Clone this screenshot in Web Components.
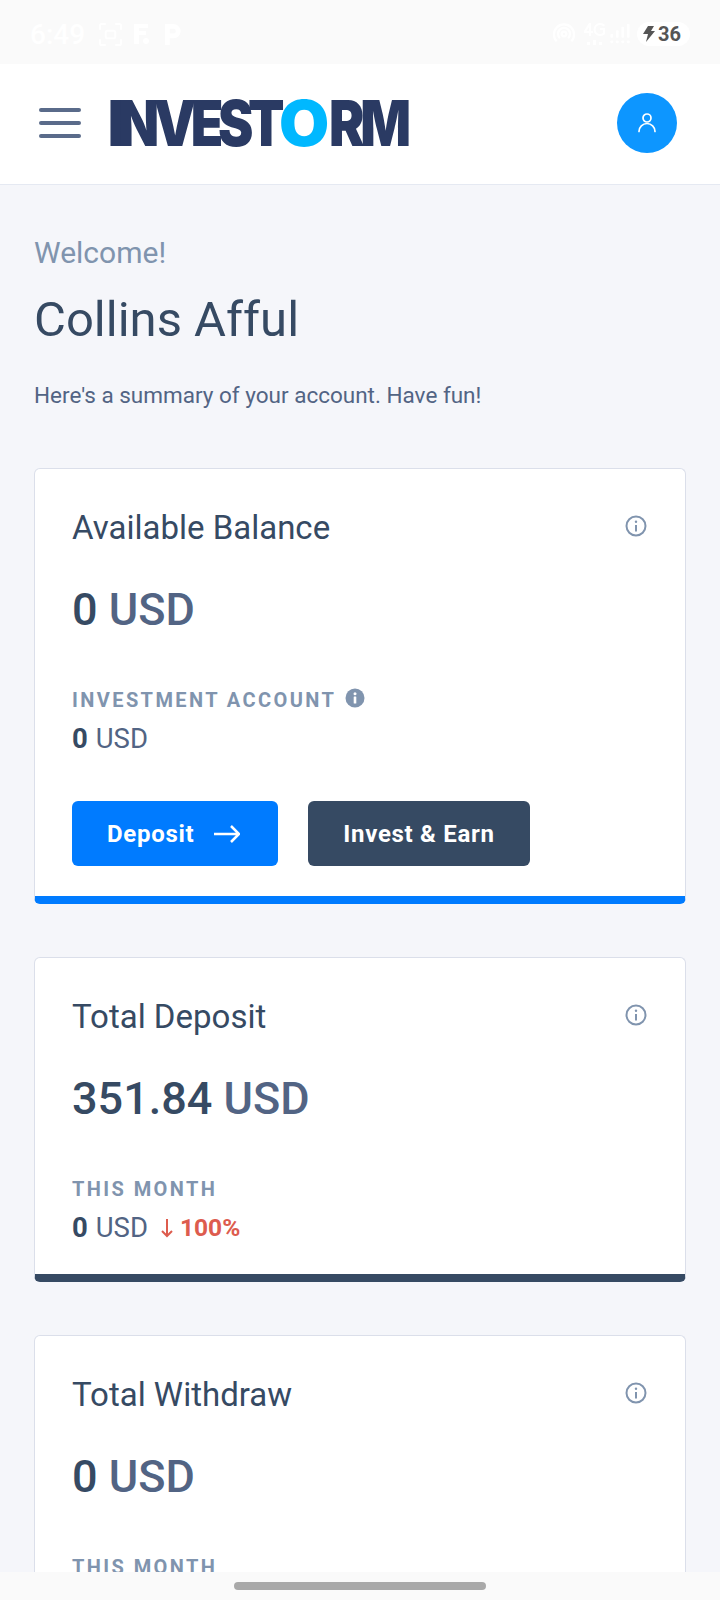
<!DOCTYPE html>
<html lang="en">
<head>
<meta charset="utf-8">
<title>Investorm</title>
<style>
    html, body { margin: 0; padding: 0; }
    body { width: 720px; height: 1600px; overflow: hidden; background: #f5f6fa; font-family: Roboto, "Liberation Sans", sans-serif; }
    #app { display: flex; flex-direction: column; height: 1600px; }
    #content { flex: 1; min-height: 0; overflow: hidden; padding: 0 34px; }
</style>
</head>
<body>
<div id="app">
    <status-bar></status-bar>
    <site-header></site-header>
    <div id="content">
        <welcome-block name="Collins Afful" note="Here's a summary of your account. Have fun!"></welcome-block>
        <stat-card title="Available Balance" amount="0" label="INVESTMENT ACCOUNT" sub="0" bar="#007bff" hint wide>
            <action-button slot="actions" color="#007bff" arrow>Deposit</action-button>
            <action-button slot="actions" color="#364a63">Invest &amp; Earn</action-button>
        </stat-card>
        <stat-card title="Total Deposit" amount="351.84" label="THIS MONTH" sub="0" bar="#364a63" change="100%"></stat-card>
        <stat-card title="Total Withdraw" amount="0" label="THIS MONTH" bar="#364a63"></stat-card>
    </div>
    <nav-bar></nav-bar>
</div>

<script>
class StatusBar extends HTMLElement {
    constructor() {
        super();
        this.attachShadow({ mode: 'open' });
        this.shadowRoot.innerHTML = `
            <style>
                :host { display: flex; flex: none; height: 64px; background: #fafafa; align-items: center; padding: 4px 30px 0 30px; box-sizing: border-box; font-family: Roboto, sans-serif; }
                .time { color: #fff; font-size: 28px; font-weight: 500; margin-right: 2px; }
                svg { display: block; flex: none; }
                .left { display: flex; align-items: center; gap: 12px; flex: 1; }
                .right { display: flex; align-items: center; gap: 4px; }
                .battery { display: flex; align-items: center; gap: 3px; height: 24px; padding: 0 9px 0 6px; margin-left: 2px; background: #fff; border-radius: 12px; color: #555; font-size: 20px; font-weight: 700; }
            </style>
            <div class="left">
                <span class="time">6:49</span>
                <svg width="23" height="23" viewBox="0 0 24 24" fill="none" stroke="#fff" stroke-width="2"><path d="M1 7V3a2 2 0 0 1 2-2h4M17 1h4a2 2 0 0 1 2 2v4M23 17v4a2 2 0 0 1-2 2h-4M7 23H3a2 2 0 0 1-2-2v-4"/><rect x="7" y="8" width="10" height="8" rx="2"/></svg>
                <svg width="15" height="20" viewBox="0 0 15 20" fill="#fff"><path d="M0 0h14v4H5v3h7v4H5v9H0z"/><circle cx="12" cy="17" r="3"/></svg>
                <svg width="17" height="21" viewBox="0 0 18 22" fill="#fff" style="margin-left:4px"><path d="M0 0h9a7.500 7.500 0 0 1 0 15H5v7H0zM5 5v5h4a2.500 2.500 0 0 0 0-5z"/></svg>
            </div>
            <div class="right">
                <svg width="22" height="22" viewBox="0 0 24 24" fill="none" stroke="#fff" stroke-width="2.500"><circle cx="12" cy="12" r="2.500"/><path d="M4 20a11 11 0 1 1 16 0M7.500 16.500a6.500 6.500 0 1 1 9 0"/></svg>
                <svg width="22" height="24" viewBox="0 0 22 24" fill="#fff" style="margin-left:5px"><rect x="3" y="20" width="3" height="3"/><rect x="9" y="18" width="3" height="5"/><rect x="15" y="20" width="3" height="3"/><path d="M0 9l5-8h2v8h2v2H7v3H5v-3H0zM5 9V5L2.500 9zM16 1a6 6 0 0 1 5 2l-1.500 1.500A4 4 0 0 0 16 3a4 4 0 0 0 0 9 3.500 3.500 0 0 0 3-1V8h-3V6h5v6a6.500 6.500 0 0 1-5 2 6.500 6.500 0 0 1 0-13z"/></svg>
                <svg width="21" height="22" viewBox="0 0 22 24" fill="#fff"><rect x="0" y="12" width="3" height="4" rx="1"/><rect x="6" y="8" width="3" height="8" rx="1"/><rect x="12" y="4" width="3" height="12" rx="1"/><rect x="18" y="1" width="3" height="15" rx="1"/><rect x="0" y="19" width="3" height="3" rx="1"/><rect x="6" y="19" width="3" height="3" rx="1"/><rect x="12" y="19" width="3" height="3" rx="1"/><rect x="18" y="19" width="3" height="3" rx="1"/></svg>
                <span class="battery">
                    <svg width="12" height="16" viewBox="0 0 12 16" fill="#555"><path d="M5 0h6L8 5h4L3 16l2-8H0z"/></svg>
                    36
                </span>
            </div>
        `;
    }
}

class SiteHeader extends HTMLElement {
    constructor() {
        super();
        this.attachShadow({ mode: 'open' });
        this.shadowRoot.innerHTML = `
            <style>
                :host { display: flex; flex: none; height: 121px; background: #fff; border-bottom: 1px solid #e5e9f2; box-sizing: border-box; align-items: center; padding: 0 43px 2px 39px; }
                .menu { display: flex; flex-direction: column; gap: 9px; width: 42px; margin-right: 27px; }
                .menu i { display: block; height: 4px; border-radius: 2px; background: #5a6b8a; }
                .logo { flex: 1; font-family: Inter, sans-serif; font-weight: 900; font-size: 63px; line-height: 1; color: #2a3a63; white-space: nowrap; transform: scaleX(.844); transform-origin: left center; letter-spacing: -5px; }
                .logo .a { letter-spacing: -6.300px; }
                .logo .o { display: inline-block; color: #00b8ff; letter-spacing: 0; transform: scaleX(1.22); margin: 0 5px; }
                .avatar { display: flex; align-items: center; justify-content: center; width: 60px; height: 60px; border-radius: 50%; background: #0d96ff; }
            </style>
            <div class="menu"><i></i><i></i><i></i></div>
            <div class="logo"><span class="a">INVEST</span><span class="o">O</span>RM</div>
            <div class="avatar">
                <svg width="18" height="20" viewBox="0 0 18 20" fill="none" stroke="#fff" stroke-width="1.700" stroke-linecap="round"><circle cx="9" cy="5" r="4"/><path d="M1 18.500a8 8 0 0 1 16 0"/></svg>
            </div>
        `;
    }
}

class WelcomeBlock extends HTMLElement {
    constructor() {
        super();
        this.attachShadow({ mode: 'open' });
    }

    connectedCallback() {
        this.shadowRoot.innerHTML = `
            <style>
                :host { display: block; padding-top: 51px; margin-bottom: 57px; font-family: Roboto, sans-serif; }
                .hi { font-size: 30px; line-height: 34px; color: #8094ae; }
                h1 { margin: 23px 0 0; font-size: 49px; line-height: 54px; font-weight: 400; color: #364a63; }
                p { margin: 32px 0 0; font-size: 22.500px; line-height: 32px; color: #526484; }
            </style>
            <div class="hi">Welcome!</div>
            <h1>${this.getAttribute('name')}</h1>
            <p>${this.getAttribute('note')}</p>
        `;
    }
}

class InfoIcon extends HTMLElement {
    constructor() {
        super();
        this.attachShadow({ mode: 'open' });
    }

    connectedCallback() {
        const filled = this.hasAttribute('filled');
        this.shadowRoot.innerHTML = `
            <style>:host { display: inline-flex; flex: none; } svg { display: block; }</style>
            ${filled
                ? `<svg width="20" height="20" viewBox="0 0 20 20"><circle cx="10" cy="10" r="9.500" fill="#8094ae"/><circle cx="10" cy="5.800" r="1.500" fill="#fff"/><rect x="8.700" y="8.500" width="2.600" height="7" rx=".5" fill="#fff"/></svg>`
                : `<svg width="22" height="22" viewBox="0 0 22 22" fill="none" stroke="#8094ae"><circle cx="11" cy="11" r="9.500" stroke-width="2"/><path d="M11 10v6.500" stroke-width="2"/><circle cx="11" cy="6.800" r="1.200" fill="#8094ae" stroke="none"/></svg>`}
        `;
    }
}

class ActionButton extends HTMLElement {
    constructor() {
        super();
        this.attachShadow({ mode: 'open' });
    }

    connectedCallback() {
        const arrow = this.hasAttribute('arrow');
        this.shadowRoot.innerHTML = `
            <style>
                :host { display: inline-flex; align-items: center; height: 65px; padding: 0 35px; gap: 20px; border-radius: 6px; background: ${this.getAttribute('color')}; color: #fff; font-family: Roboto, sans-serif; font-size: 24px; font-weight: 700; letter-spacing: .7px; box-sizing: border-box; }
                svg { display: block; margin-right: 3px; }
            </style>
            <slot></slot>
            ${arrow ? `<svg width="26" height="18" viewBox="0 0 26 18" fill="none" stroke="#fff" stroke-width="2.500"><path d="M0 9h25M17 1l8 8-8 8"/></svg>` : ''}
        `;
    }
}

class StatCard extends HTMLElement {
    constructor() {
        super();
        this.attachShadow({ mode: 'open' });
    }

    connectedCallback() {
        const a = n => this.getAttribute(n);
        const change = a('change');
        const sub = a('sub');
        this.shadowRoot.innerHTML = `
            <style>
                :host { display: block; margin-bottom: 53px; background: #fff; border: 1px solid #dbdfea; border-bottom: 8px solid ${a('bar')}; border-radius: 6px; box-sizing: border-box; font-family: Roboto, sans-serif; padding: 38px 37px 30px; }
                .top { display: flex; justify-content: space-between; align-items: center; height: 40px; }
                .title { font-size: 33px; color: #364a63; }
                .top info-icon { margin-right: 1px; position: relative; top: -1px; }
                .amount { margin-top: 36px; font-size: 45px; line-height: 54px; font-weight: 500; color: #364a63; }
                .amount span { color: #526484; }
                .label { display: flex; align-items: center; gap: 9px; margin-top: 51px; font-size: 20px; line-height: 24px; font-weight: 700; letter-spacing: 2.400px; color: #8094ae; }
                .label info-icon { position: relative; top: -2px; }
                .sub { display: flex; align-items: center; margin-top: 11px; font-size: 27.500px; line-height: 32px; color: #526484; }
                .sub b { font-weight: 700; color: #364a63; margin-right: 8px; }
                .change { display: flex; align-items: center; margin-left: 13px; color: #dd5c4e; font-size: 24.500px; font-weight: 700; gap: 7px; }
                .actions { display: flex; gap: 30px; margin-top: 46px; }
                ::slotted(*) { flex: none; }
            </style>
            <div class="top"><span class="title">${a('title')}</span><info-icon></info-icon></div>
            <div class="amount">${a('amount')} <span>USD</span></div>
            <div class="label">${a('label')}${this.hasAttribute('hint') ? '<info-icon filled></info-icon>' : ''}</div>
            ${sub ? `<div class="sub"><b>${sub}</b> USD
                ${change ? `<span class="change"><svg width="12" height="20" viewBox="0 0 12 20" fill="none" stroke="#dd5c4e" stroke-width="2"><path d="M6 1v17M1 13l5 5 5-5"/></svg>${change}</span>` : ''}
            </div>` : ''}
            ${this.hasAttribute('wide') ? '<div class="actions"><slot name="actions"></slot></div>' : ''}
        `;
    }
}

class NavBar extends HTMLElement {
    constructor() {
        super();
        this.attachShadow({ mode: 'open' });
        this.shadowRoot.innerHTML = `
            <style>
                :host { display: flex; flex: none; height: 28px; background: #fafafa; align-items: center; justify-content: center; padding-bottom: 1px; box-sizing: border-box; }
                i { display: block; width: 252px; height: 8px; border-radius: 4px; background: #a9a9a9; }
            </style>
            <i></i>
        `;
    }
}

customElements.define('status-bar', StatusBar);
customElements.define('site-header', SiteHeader);
customElements.define('welcome-block', WelcomeBlock);
customElements.define('info-icon', InfoIcon);
customElements.define('action-button', ActionButton);
customElements.define('stat-card', StatCard);
customElements.define('nav-bar', NavBar);
</script>
</body>
</html>
